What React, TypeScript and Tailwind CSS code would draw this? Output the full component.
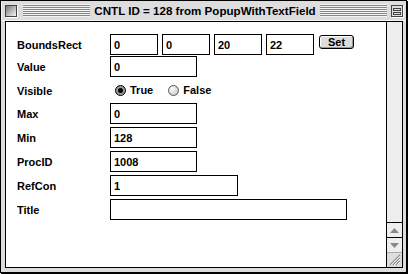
import type { ReactNode } from 'react';

const font = 'font-["Liberation_Sans",Arial,sans-serif] font-bold text-[11px] leading-none';
const stripes =
  'h-[13px] bg-[repeating-linear-gradient(to_bottom,#888_0px,#888_1px,#f4f4f4_1px,#f4f4f4_2px)] border-y border-[#f4f4f4]';

export default function App() {
  return (
    <div className={`h-[274px] w-[408px] bg-white text-black ${font}`}>
      <div className="flex h-[273px] w-[407px] flex-col border border-black bg-[#dddddd] shadow-[1px_1px_0_#000]">
        <TitleBar />
        <div className="ml-[4px] mr-[3px] flex h-[247px] w-[398px] border border-black bg-white">
          <Form />
          <ScrollBar />
        </div>
      </div>
    </div>
  );
}

function TitleBar() {
  return (
    <div className="flex h-[20px] items-center border-b border-l border-white/70 pl-[3px] pr-[3px]">
      <div className="h-[12px] w-[12px] border border-[#444] bg-[linear-gradient(135deg,#777,#f4f4f4)] shadow-[1px_1px_0_#fff]" />
      <div className={`ml-[6px] flex-1 ${stripes}`} />
      <span className="px-[4px] text-[11.6px] leading-none">
        CNTL ID = 128 from PopupWithTextField
      </span>
      <div className={`flex-1 ${stripes}`} />
      <div className="ml-[4px] flex h-[12px] w-[12px] flex-col border border-[#444] bg-[#dddddd] shadow-[1px_1px_0_#fff]">
        <div className="mx-[1px] mt-[2px] h-[3px] border border-[#444]" />
        <div className="mx-[1px] mt-[1px] h-[3px] border border-[#444]" />
      </div>
    </div>
  );
}

function Field({ value, width }: { value?: string; width: string }) {
  return (
    <div className={`flex h-[21px] items-center border border-black pl-[3px] pt-[1px] ${width}`}>
      {value}
    </div>
  );
}

function Row({ label, height, children }: { label: string; height: string; children: ReactNode }) {
  return (
    <div className={`flex items-start ${height}`}>
      <div className="flex h-[21px] w-[93px] items-center pt-[1px]">{label}</div>
      <div className="flex items-start">{children}</div>
    </div>
  );
}

function Radio({ checked, label }: { checked?: boolean; label: string }) {
  return (
    <div className="flex items-center">
      <div
        className={`flex h-[11px] w-[11px] items-center justify-center rounded-full border ${
          checked ? 'border-black bg-[#999]' : 'border-[#555] bg-[radial-gradient(circle_at_35%_35%,#fff,#bbb)]'
        }`}
      >
        {checked && <div className="h-[5px] w-[5px] rounded-full bg-black" />}
      </div>
      <span className="ml-[4px]">{label}</span>
    </div>
  );
}

function Form() {
  return (
    <div className="flex flex-1 flex-col pl-[11px] pt-[12px]">
      <Row label="BoundsRect" height="h-[22px]">
        <div className="flex gap-[4px]">
          <Field value="0" width="w-[48px]" />
          <Field value="0" width="w-[48px]" />
          <Field value="20" width="w-[48px]" />
          <Field value="22" width="w-[48px]" />
        </div>
        <button
          type="button"
          className="ml-[5px] mt-[1px] flex h-[14px] w-[35px] items-center justify-center rounded-[3px] border border-black bg-[#dddddd] shadow-[inset_1px_1px_0_#fff,inset_-1px_-1px_0_#999]"
        >
          Set
        </button>
      </Row>
      <Row label="Value" height="h-[24px]">
        <Field value="0" width="w-[87px]" />
      </Row>
      <Row label="Visible" height="h-[23px]">
        <div className="flex h-[21px] items-center gap-[15px] pl-[5px]">
          <Radio checked label="True" />
          <Radio label="False" />
        </div>
      </Row>
      <Row label="Max" height="h-[24px]">
        <Field value="0" width="w-[87px]" />
      </Row>
      <Row label="Min" height="h-[24px]">
        <Field value="128" width="w-[87px]" />
      </Row>
      <Row label="ProcID" height="h-[24px]">
        <Field value="1008" width="w-[87px]" />
      </Row>
      <Row label="RefCon" height="h-[24px]">
        <Field value="1" width="w-[128px]" />
      </Row>
      <Row label="Title" height="h-[24px]">
        <Field width="w-[237px]" />
      </Row>
    </div>
  );
}

function ScrollBar() {
  return (
    <div className="flex w-[16px] flex-col border-l border-black bg-[#eeeeee]">
      <div className="flex-1" />
      <div className="flex h-[15px] items-center justify-center border-t border-black">
        <svg width="9" height="5" viewBox="0 0 9 5">
          <path d="M0 5 L4.5 0 L9 5 Z" fill="#888" />
        </svg>
      </div>
      <div className="flex h-[15px] items-center justify-center border-t border-black">
        <svg width="9" height="5" viewBox="0 0 9 5">
          <path d="M0 0 L9 0 L4.5 5 Z" fill="#888" />
        </svg>
      </div>
      <div className="flex h-[15px] items-center justify-center border-t border-[#aaa] bg-[#dddddd]">
        <svg width="12" height="12" viewBox="0 0 12 12">
          <path d="M1 11 L11 1 M4 11 L11 4 M7 11 L11 7" stroke="#888" strokeWidth="1.2" />
          <path d="M2 11 L11 2 M5 11 L11 5 M8 11 L11 8" stroke="#fff" strokeWidth="0.8" />
        </svg>
      </div>
    </div>
  );
}
